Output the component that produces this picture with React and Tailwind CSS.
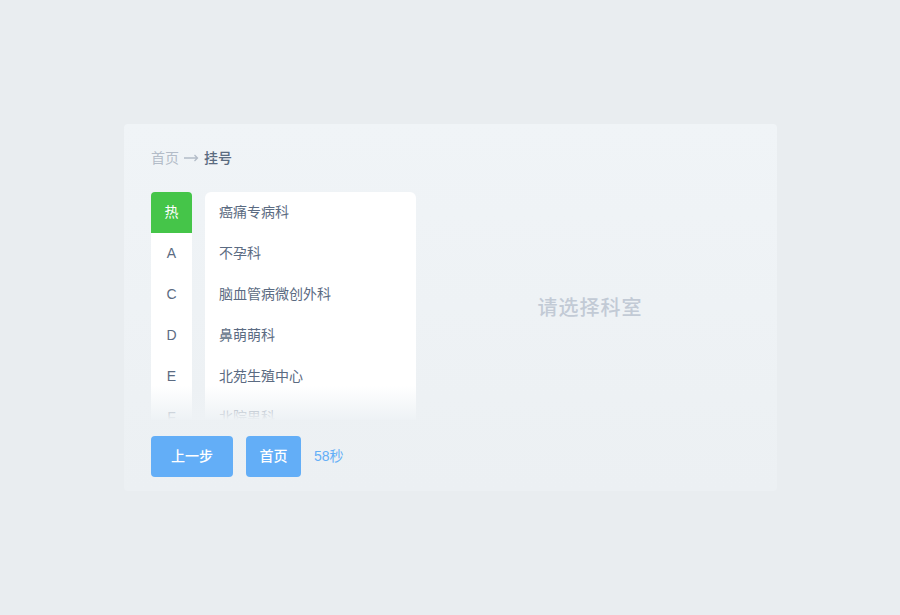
import React from "react";

const letters = ["热", "A", "C", "D", "E", "F"];
const depts = ["癌痛专病科", "不孕科", "脑血管病微创外科", "鼻萌萌科", "北苑生殖中心", "北院男科"];

export default function App() {
  return (
    <div
      className="w-[900px] h-[615px] bg-[#e9edf0] flex items-start justify-start pt-[124px] pl-[124px]"
      style={{ fontFamily: '"Liberation Sans", "Noto Sans CJK SC", sans-serif' }}
    >
      <div className="w-[653px] h-[367px] rounded-[4px] bg-gradient-to-b from-[#f0f4f7] to-[#ecf0f3] pl-[27px] pr-[13px] pt-[24px] flex flex-col">
        <div className="h-[20px] flex items-center text-[14px] leading-[20px] gap-[5px]">
          <span className="text-[#b3bcc8]">首页</span>
          <svg width="15" height="8" viewBox="0 0 15 8" fill="none" stroke="#b3bcc8" strokeWidth="1.3">
            <path d="M0 4h13.5M10.5 1l3 3-3 3" />
          </svg>
          <span className="text-[#5b6b80] font-medium">挂号</span>
        </div>
        <div className="mt-[24px] h-[228px] flex relative">
          <div className="w-[41px] flex flex-col overflow-hidden">
            {letters.map((l, i) => (
              <div
                key={l}
                className={
                  i === 0
                    ? "h-[41px] shrink-0 flex items-center justify-center bg-[#45c549] text-white text-[14px] rounded-t-[4px]"
                    : "h-[41px] shrink-0 flex items-center justify-center bg-white text-[#5b6b82] text-[14px]"
                }
              >
                {l}
              </div>
            ))}
          </div>
          <div className="ml-[13px] w-[211px] bg-white rounded-t-[6px] flex flex-col overflow-hidden">
            {depts.map((d) => (
              <div key={d} className="h-[41px] shrink-0 flex items-center pl-[14px] text-[14px] text-[#5b6b82]">
                {d}
              </div>
            ))}
          </div>
          <div className="pointer-events-none absolute left-0 bottom-0 w-[265px] h-[34px] bg-gradient-to-b from-[rgba(238,242,245,0)] to-[#eef2f5]" />
          <div className="flex-1 flex items-center justify-center pt-[4px] text-[20px] font-medium text-[#c2cad5] tracking-[1px]">
            请选择科室
          </div>
        </div>
        <div className="mt-[16px] flex items-center">
          <div className="w-[82px] h-[41px] rounded-[4px] bg-[#63aef7] text-white text-[14px] font-medium flex items-center justify-center">
            上一步
          </div>
          <div className="ml-[13px] w-[55px] h-[41px] rounded-[4px] bg-[#63aef7] text-white text-[14px] font-medium flex items-center justify-center">
            首页
          </div>
          <div className="ml-[13px] text-[14px] text-[#63aef7]">58秒</div>
        </div>
      </div>
    </div>
  );
}
